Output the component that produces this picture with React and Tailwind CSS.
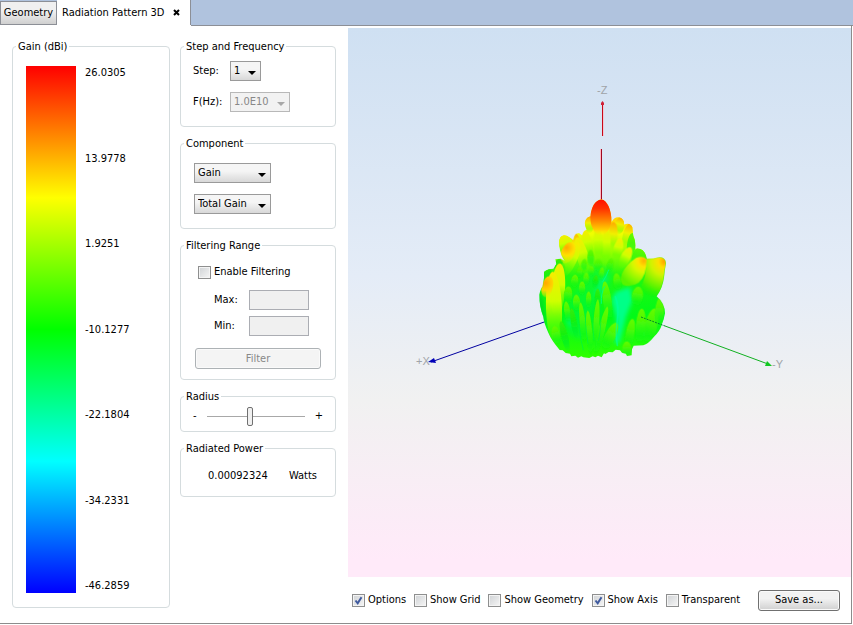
import { useState } from "react";

const GAIN_LABELS = ["26.0305", "13.9778", "1.9251", "-10.1277", "-22.1804", "-34.2331", "-46.2859"];

// Every lobe is an ellipse: [cx, cy, rx, ry, rotation, gradient id]
const BACK_LOBES = [
  [178, 104, 13, 26, 0, "orangeLobe"],
  [268, 108, 15, 27, 14, "orangeLobe"],
  [294, 138, 16, 40, 14, "orangeLobe"],
  [108, 165, 21, 31, -14, "yellowLobe"],
  [304, 165, 13, 36, 6, "limeLobe"],
  [90, 235, 16, 28, -8, "greenLobe"],
  [328, 204, 23, 34, 14, "limeLobe"],
  [55, 262, 16, 28, -8, "greenLobe"],
];

const FRONT_LOBES = [
  [142, 165, 14, 38, -16, "orangeLobe"],
  [172, 165, 16, 46, -12, "yellowLobe"],
  [158, 200, 18, 60, -16, "yellowLobe"],
  [122, 208, 19, 56, 24, "yellowLobe"],
  [246, 140, 17, 44, 6, "orangeLobe"],
  [228, 168, 14, 60, 2, "yellowLobe"],
  [205, 160, 14, 56, -2, "yellowLobe"],
  [264, 178, 14, 34, 14, "yellowLobe"],
  [286, 204, 15, 36, 26, "yellowLobe"],
  [84, 300, 21, 80, 4, "yellowLobe"],
  [72, 355, 24, 110, -2, "yellowLobe"],
  [182, 205, 10, 26, 0, "limeLobe"],
  [205, 226, 12, 20, 0, "limeLobe"],
  [162, 226, 9, 20, 8, "limeLobe"],
  [240, 226, 10, 22, 14, "limeLobe"],
  [184, 244, 8, 16, 4, "limeLobe"],
  [148, 248, 9, 18, 10, "limeLobe"],
  [214, 252, 8, 20, 10, "limeLobe"],
  [168, 268, 9, 20, 4, "limeLobe"],
  [134, 274, 11, 20, 6, "limeLobe"],
  [196, 276, 8, 20, 8, "greenLobe"],
  [156, 296, 10, 22, 2, "limeLobe"],
  [262, 276, 12, 26, -8, "limeLobe"],
  [114, 316, 13, 27, 4, "limeLobe"],
  [140, 340, 11, 26, -4, "limeLobe"],
  [176, 330, 8, 26, 0, "limeLobe"],
  [202, 326, 8, 30, 2, "greenLobe"],
  [232, 334, 13, 60, -8, "limeLobe"],
  [322, 320, 17, 30, 8, "limeLobe"],
  [112, 366, 9, 32, -8, "limeLobe"],
  [132, 400, 9, 46, -10, "greenLobe"],
  [158, 400, 9, 62, -6, "limeLobe"],
  [178, 430, 9, 68, -4, "limeLobe"],
  [198, 410, 9, 82, 4, "limeLobe"],
  [214, 424, 10, 76, 14, "limeLobe"],
  [240, 440, 16, 46, 26, "limeLobe"],
  [78, 436, 13, 28, -10, "limeLobe"],
  [104, 440, 10, 48, -14, "greenLobe"],
  [300, 432, 13, 46, 10, "limeLobe"],
  [332, 410, 15, 54, 4, "limeLobe"],
  [362, 410, 19, 56, 14, "limeLobe"],
  [388, 370, 14, 48, 4, "limeLobe"],
  [290, 478, 14, 24, 2, "limeLobe"],
];

const SILHOUETTE =
  "M214 28 C232 32 244 58 245 96 Q252 80 268 82 Q284 88 282 104 Q300 96 307 112 Q308 128 310 138 Q318 152 316 176 Q344 172 350 206 Q368 208 380 203 Q406 198 408 220 Q404 240 402 262 Q398 294 380 319 Q405 342 405 370 Q402 388 396 402 Q390 424 372 440 Q354 462 340 466 L311 467 L306 478 L305 496 L291 498 L288 491 L276 488 L270 481 L257 479 L248 487 L236 486 L226 492 L222 490 L215 502 L204 497 L196 502 L188 499 L178 504 L160 502 L154 499 L144 503 L136 497 L124 499 L120 491 L107 489 L98 481 L89 480 Q64 450 55 428 Q42 400 40 380 Q28 350 28 314 Q32 294 38 290 L42 264 L42 246 Q54 236 70 236 L79 222 L76 208 L92 206 L105 214 Q90 192 88 168 Q84 138 102 136 Q118 138 130 152 Q134 126 148 130 L157 137 Q160 122 170 120 Q158 94 172 83 L181 79 C184 52 194 32 214 28Z";

function LobeGradient({ id, tip, mid, base }) {
  return (
    <linearGradient id={id} x1="0" y1="0" x2="0" y2="1">
      <stop offset="0" stopColor={tip} />
      <stop offset="0.4" stopColor={mid} />
      <stop offset="0.75" stopColor={base} stopOpacity="0.6" />
      <stop offset="1" stopColor={base} stopOpacity="0" />
    </linearGradient>
  );
}

function Lobes({ items }) {
  return items.map(([cx, cy, rx, ry, rot, fill], i) => (
    <ellipse key={i} cx={cx} cy={cy} rx={rx} ry={ry} fill={`url(#${fill})`} transform={`rotate(${rot} ${cx} ${cy})`} />
  ));
}

function PatternView() {
  return (
    <svg
      viewBox="348 28 503 549"
      role="img"
      aria-label="Radiation pattern"
      className="h-0 w-full grow font-['Liberation_Sans',sans-serif] text-[11px]"
    >
      <defs>
        <linearGradient id="body" gradientUnits="userSpaceOnUse" x1="0" y1="90" x2="0" y2="505">
          <stop offset="0" stopColor="#ffd800" />
          <stop offset="0.1" stopColor="#f0ff00" />
          <stop offset="0.24" stopColor="#90ff00" />
          <stop offset="0.4" stopColor="#20f810" />
          <stop offset="0.7" stopColor="#00fa18" />
          <stop offset="1" stopColor="#30ff00" />
        </linearGradient>
        <linearGradient id="mainLobe" x1="0" y1="0" x2="0" y2="1">
          <stop offset="0" stopColor="#ff1000" />
          <stop offset="0.25" stopColor="#ff3000" />
          <stop offset="0.6" stopColor="#ff8800" />
          <stop offset="0.85" stopColor="#ffd000" />
          <stop offset="1" stopColor="#fff000" stopOpacity="0" />
        </linearGradient>
        <radialGradient id="rightLobe" gradientUnits="userSpaceOnUse" cx="342" cy="212" r="82">
          <stop offset="0" stopColor="#ffb000" />
          <stop offset="0.22" stopColor="#ffe400" />
          <stop offset="0.42" stopColor="#d8f800" />
          <stop offset="0.8" stopColor="#80f800" />
          <stop offset="1" stopColor="#58f400" />
        </radialGradient>
        <radialGradient id="farRightLobe" gradientUnits="userSpaceOnUse" cx="404" cy="214" r="120">
          <stop offset="0" stopColor="#ffa000" />
          <stop offset="0.16" stopColor="#ffe000" />
          <stop offset="0.35" stopColor="#d0f400" />
          <stop offset="0.7" stopColor="#58f400" />
          <stop offset="1" stopColor="#10f010" stopOpacity="0" />
        </radialGradient>
        <radialGradient id="leftLobe" gradientUnits="userSpaceOnUse" cx="44" cy="280" r="54">
          <stop offset="0" stopColor="#ffa800" />
          <stop offset="0.4" stopColor="#ffd400" />
          <stop offset="1" stopColor="#e8f400" stopOpacity="0" />
        </radialGradient>
        <radialGradient id="upperLeftLobe" gradientUnits="userSpaceOnUse" cx="104" cy="176" r="58">
          <stop offset="0" stopColor="#ffa800" />
          <stop offset="0.4" stopColor="#ffe000" />
          <stop offset="1" stopColor="#d0f800" stopOpacity="0" />
        </radialGradient>
        <LobeGradient id="orangeLobe" tip="#ffa800" mid="#f0f000" base="#88ff00" />
        <LobeGradient id="yellowLobe" tip="#f8ec00" mid="#d0ff00" base="#70ff00" />
        <LobeGradient id="limeLobe" tip="#68fa00" mid="#48f808" base="#18f818" />
        <LobeGradient id="greenLobe" tip="#38ec08" mid="#18f010" base="#00f028" />
        <clipPath id="outline">
          <path d={SILHOUETTE} />
        </clipPath>
        <filter id="soft" x="-30%" y="-30%" width="160%" height="160%">
          <feGaussianBlur stdDeviation="7" />
        </filter>
        <filter id="edge" x="-30%" y="-30%" width="160%" height="160%">
          <feGaussianBlur stdDeviation="1.5" />
        </filter>
      </defs>

      <g fill="#a0a4a8">
        <text x="597" y="94">-Z</text>
        <text x="416" y="365">+X</text>
        <text x="772" y="368">-Y</text>
      </g>

      <rect x="600" y="149" width="1" height="51" fill="#ffb8c4" />
      <rect x="601" y="149" width="1" height="51" fill="#a00820" />
      <rect x="602" y="105" width="1" height="31" fill="#c80818" />
      <rect x="603" y="105" width="1" height="31" fill="#f0c8d4" />
      <path d="M602.5 101l1.5 2v2h-3v-2z" fill="#d02038" />
      <path d="M547 321L431 362" stroke="#0000a0" />
      <path d="M428 362l6-4 2 5z" fill="#0000b8" />

      <g transform="translate(530 190) scale(0.33333)">
        <path d={SILHOUETTE} fill="url(#body)" />
        <g clipPath="url(#outline)">
          <Lobes items={BACK_LOBES} />
          <g filter="url(#soft)">
            <path d="M190 225L250 240L240 290L200 340L150 450L110 430L120 330Z" fill="#00f840" opacity="0.5" />
            <path d="M20 300L38 330L44 400L30 400Z" fill="#00d820" />
            <path d="M256 306L300 290L308 330L288 380L268 460L254 460L260 390L244 330Z" fill="#00ff88" />
            <path d="M215 255L236 258L205 325L192 315Z" fill="#00f868" />
            <path d="M112 365L128 395L122 415L110 400Z" fill="#00f868" />
          </g>
          <g filter="url(#edge)">
            <Lobes items={FRONT_LOBES} />
            <path d="M349 208Q354 202 380 203Q406 198 408 220Q404 240 402 262Q398 294 380 319Q350 322 330 296Q350 262 349 208Z" fill="url(#farRightLobe)" />
            <path d="M350 208Q338 196 318 204Q288 224 276 250Q268 272 278 284Q302 294 326 278Q350 256 350 208Z" fill="url(#rightLobe)" />
            <ellipse cx="52" cy="290" rx="17" ry="32" fill="url(#leftLobe)" transform="rotate(14 52 290)" />
            <ellipse cx="114" cy="188" rx="20" ry="34" fill="url(#upperLeftLobe)" transform="rotate(24 114 188)" />
          </g>
          <g filter="url(#edge)" fill="none" strokeWidth="3" strokeLinecap="round">
            <path d="M190 345Q186 390 192 450M212 340Q216 400 206 450M166 350Q164 400 174 460M146 370Q144 420 160 480" stroke="#00f040" opacity="0.7" />
            <path d="M256 320Q268 350 262 390Q256 430 262 466" stroke="#00ffa0" strokeWidth="5" opacity="0.6" />
            <path d="M224 290Q212 310 214 340M236 240Q230 258 218 276" stroke="#00ff80" />
          </g>
          <ellipse cx="213" cy="82" rx="32" ry="54" fill="url(#mainLobe)" />
        </g>
      </g>

      <path d="M641 317L665 326" stroke="#008828" strokeDasharray="2 1" />
      <path d="M665 326L768 364" stroke="#10b020" />
      <path d="M772 366l-7 0 2-5z" fill="#10c820" />
    </svg>
  );
}

function Group({ title, className, children }) {
  return (
    <fieldset className="min-w-0 rounded-[4px] border border-[#d5dcde]">
      <legend className="ml-[3px] h-4 px-[2px] leading-[18px]">{title}</legend>
      <div className={className}>{children}</div>
    </fieldset>
  );
}

function Combo({ value, width, ...rest }) {
  return (
    <span className={`relative inline-block ${width}`}>
      <select
        {...rest}
        className="block h-5 w-full appearance-none border border-[#9a9a9a] bg-linear-to-b from-[#f5f5f5] from-40% to-[#d8d8d8] pl-[3px] text-black disabled:border-[#b8b8b8] disabled:bg-none disabled:bg-[#f2f2f2] disabled:text-[#888888] disabled:opacity-100"
      >
        <option>{value}</option>
      </select>
      <svg viewBox="0 0 8 4" className="pointer-events-none absolute right-[5px] bottom-[6px] h-1 w-2">
        <path d="M0 0h8L4 4z" fill={rest.disabled ? "#a8a8a8" : "#000"} />
      </svg>
    </span>
  );
}

function Check({ label, initial = false }) {
  const [checked, setChecked] = useState(initial);
  return (
    <label className="flex items-center gap-[3px] whitespace-nowrap">
      <span className="relative block size-[13px]">
        <input
          type="checkbox"
          checked={checked}
          onChange={(e) => setChecked(e.target.checked)}
          className="peer block size-[13px] appearance-none border border-[#8e8f8f] bg-linear-to-br from-[#cfd2d5] to-[#f6f6f6] shadow-[inset_0_0_0_1px_#f4f4f4]"
        />
        <svg viewBox="0 0 13 13" className="pointer-events-none absolute inset-0 hidden size-[13px] peer-checked:block">
          <path d="M3.5 6.5L5.7 9.3L9.5 3.3" fill="none" stroke="#3f5a9e" strokeWidth="2" />
        </svg>
      </span>
      {label}
    </label>
  );
}

const BUTTON =
  "h-[21px] rounded-[3px] border border-[#707070] bg-linear-to-b from-[#f2f2f2] from-40% to-[#d0d0d0] text-black shadow-[inset_0_0_0_1px_#fafafa] disabled:border-[#adb2b5] disabled:bg-none disabled:bg-[#f4f4f4] disabled:text-[#888888]";

export default function App() {
  const [radius, setRadius] = useState(44);
  return (
    <div className="flex min-h-screen flex-col bg-white font-['DejaVu_Sans_Condensed','DejaVu_Sans',sans-serif] text-[11px] leading-[14px] text-black">
      <div role="tablist" className="flex h-[25px] bg-[#b0c3de]">
        <button
          role="tab"
          aria-selected="false"
          className="mt-px h-6 w-[57px] border border-[#8c8f96] bg-linear-to-b from-[#f0f0f0] from-40% to-[#d0d0d0] whitespace-nowrap"
        >
          Geometry
        </button>
        <div className="flex w-[134px] items-center justify-between border-r border-[#8c8f96] bg-white pr-[10px] pl-[5px]">
          <button role="tab" aria-selected="true" className="whitespace-nowrap">
            Radiation Pattern 3D
          </button>
          <button aria-label="Close tab">
            <svg viewBox="0 0 7 7" className="size-[7px]">
              <path d="M1 1l5 5M6 1L1 6" stroke="#000" strokeWidth="2" />
            </svg>
          </button>
        </div>
        <div className="-mb-px flex-1 border-b border-[#8c8f96] pb-px" />
      </div>

      <main className="mr-px mb-px flex flex-1 gap-3 border-r border-b border-[#8c8c8c] pl-3">
        <div className="flex gap-[10px] pt-[13px] pb-[15px]">
          <fieldset className="flex w-[158px] flex-col rounded-[4px] border border-[#d5dcde] pt-3 pb-[14px] pl-[13px]">
            <legend className="ml-[-10px] h-4 px-[2px] leading-[18px]">Gain (dBi)</legend>
            <div className="flex flex-1 gap-[9px]">
              <div className="w-[50px] bg-[linear-gradient(to_bottom,#ff0000,#ffff00,#00ff00,#00ffff,#0000ff)]" />
              <div className="flex flex-col justify-between">
                {GAIN_LABELS.map((g) => (
                  <span key={g}>{g}</span>
                ))}
              </div>
            </div>
          </fieldset>

          <div className="flex w-[156px] flex-col gap-2">
            <Group title="Step and Frequency" className="flex flex-col gap-[11px] px-3 pt-[7px] pb-[14px]">
              <div className="flex items-center">
                <label htmlFor="step" className="w-[37px]">Step:</label>
                <Combo id="step" value="1" width="w-[31px]" />
              </div>
              <div className="flex items-center">
                <label htmlFor="freq" className="w-[37px] whitespace-nowrap">F(Hz):</label>
                <Combo id="freq" value="1.0E10" width="w-[60px]" disabled />
              </div>
            </Group>

            <Group title="Component" className="flex flex-col gap-[11px] px-[13px] pt-3 pb-[14px]">
              <Combo value="Gain" width="w-[77px]" aria-label="Component" />
              <Combo value="Total Gain" width="w-[77px]" aria-label="Polarization" />
            </Group>

            <Group title="Filtering Range" className="px-[14px] pt-3 pb-[10px]">
              <div className="pl-[3px]">
                <Check label="Enable Filtering" />
              </div>
              <div className="mt-[11px] grid grid-cols-[35px_60px] items-center gap-y-[6px] pl-[19px]">
                <label htmlFor="max">Max:</label>
                <input id="max" disabled className="h-5 w-full border border-[#abadb3] bg-[#f0f0f0]" />
                <label htmlFor="min">Min:</label>
                <input id="min" disabled className="h-5 w-full border border-[#abadb3] bg-[#f0f0f0]" />
              </div>
              <button disabled className={`mt-3 w-full ${BUTTON}`}>Filter</button>
            </Group>

            <Group title="Radius" className="flex items-center gap-[10px] px-3 pt-[2px] pb-[5px]">
              <span>-</span>
              <input
                type="range"
                aria-label="Radius"
                value={radius}
                onChange={(e) => setRadius(+e.target.value)}
                className="h-5 min-w-0 flex-1 appearance-none bg-transparent bg-[linear-gradient(#a8a8a8,#a8a8a8)] bg-[length:100%_1px] bg-center bg-no-repeat [&::-webkit-slider-thumb]:h-[19px] [&::-webkit-slider-thumb]:w-[6px] [&::-webkit-slider-thumb]:appearance-none [&::-webkit-slider-thumb]:rounded-[2px] [&::-webkit-slider-thumb]:border [&::-webkit-slider-thumb]:border-[#707070] [&::-webkit-slider-thumb]:bg-[#f0f0f0]"
              />
              <span>+</span>
            </Group>

            <Group title="Radiated Power" className="flex justify-between pt-[13px] pr-[18px] pb-[13px] pl-[27px]">
              <span>0.00092324</span>
              <span>Watts</span>
            </Group>
          </div>
        </div>

        <div className="flex min-w-0 flex-1 flex-col pt-[3px]">
          <div className="flex flex-1 flex-col bg-[linear-gradient(to_bottom,#cfe0f2,#e4ecf7_45%,#f1f1f1_68%,#ffeaf9_97%)]">
            <PatternView />
          </div>
          <div className="flex h-[46px] items-center justify-between pr-[11px] pl-1">
            <Check label="Options" initial />
            <Check label="Show Grid" />
            <Check label="Show Geometry" />
            <Check label="Show Axis" initial />
            <Check label="Transparent" />
            <button className={`ml-[10px] w-[82px] ${BUTTON}`}>Save as...</button>
          </div>
        </div>
      </main>
    </div>
  );
}
